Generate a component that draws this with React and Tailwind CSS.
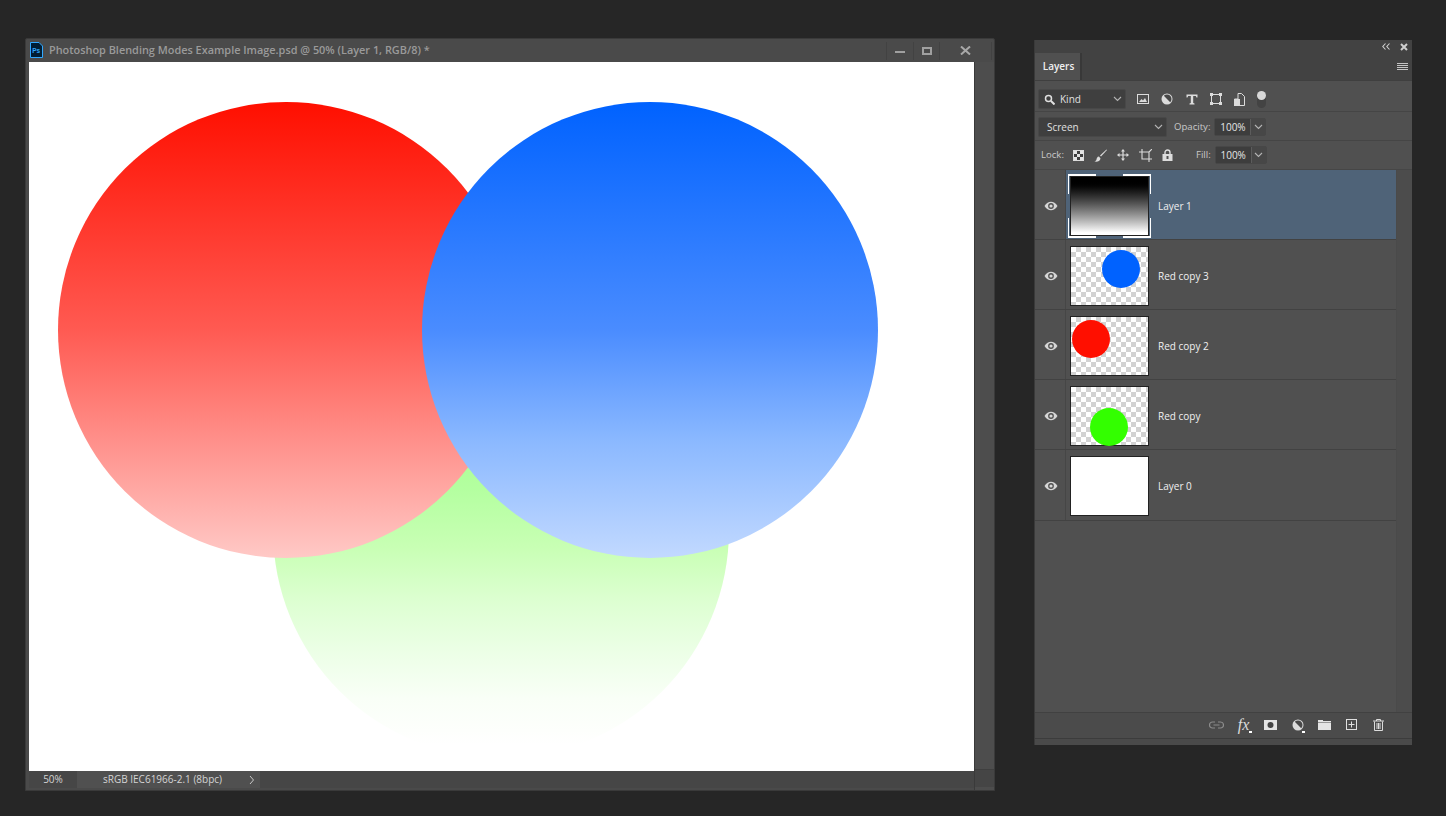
const CHECK = "bg-[conic-gradient(#d2d2d2_25%,#ffffff_0_50%,#d2d2d2_0_75%,#ffffff_0)] bg-[length:10px_10px]";

function Chevron({ className = "" }) {
  return (
    <svg width="9" height="6" viewBox="0 0 9 6" className={className}>
      <path d="M1 1l3.5 3.5L8 1" fill="none" stroke="#b4b4b4" strokeWidth="1.1" />
    </svg>
  );
}

function Eye() {
  return (
    <svg width="14" height="10" viewBox="0 0 14 10">
      <path d="M0.5 5C2.5 2 4.5 0.8 7 0.8S11.5 2 13.5 5C11.5 8 9.5 9.2 7 9.2S2.5 8 0.5 5z" fill="#d6d6d6" />
      <circle cx="7" cy="5" r="2.9" fill="#505050" />
      <circle cx="7" cy="5" r="1.6" fill="#d6d6d6" />
    </svg>
  );
}

function Adjust() {
  return (
    <svg width="12" height="12" viewBox="0 0 12 12">
      <circle cx="6" cy="6" r="5.5" fill="#dcdcdc" />
      <path d="M2.8 2.8A4.5 4.5 0 0 1 9.2 9.2z" fill="#484848" />
    </svg>
  );
}

function LayerRow({ name, selected, last, children }) {
  return (
    <div className={`flex border-b border-[#424242] ${last ? "h-[71px]" : "h-[70px]"} ${selected ? "bg-[#4f6378]" : ""}`}>
      <div className={`flex w-[31px] shrink-0 items-center justify-center border-r border-[#464646] pl-[2px] pt-[2px] ${selected ? "bg-[#505050]" : ""}`}>
        <Eye />
      </div>
      <div className="flex shrink-0 items-center pl-[4px] pt-[2px]">{children}</div>
      <span className="ml-[9px] mt-[3px] self-center text-[10px] text-[#f0f0f0]">{name}</span>
    </div>
  );
}

function Thumb({ children }) {
  return <div className={`flex h-[60px] w-[79px] border border-[#222222] ${CHECK}`}>{children}</div>;
}

function Dot({ className }) {
  return <div className={`h-[38px] w-[38px] rounded-full ${className}`} />;
}

function ValueBox() {
  return (
    <div className="flex h-[18px] items-center rounded-[2px] border border-[#474747]">
      <span className="flex h-full w-[35px] items-center justify-center bg-[#3d3d3d] text-[10px] text-[#e6e6e6]">100%</span>
      <span className="flex h-full w-[15px] items-center justify-center border-l border-[#5c5c5c] bg-[#474747]">
        <Chevron />
      </span>
    </div>
  );
}

export default function App() {
  return (
    <div className="flex h-[816px] w-full items-start gap-[39px] overflow-hidden bg-[#262626] pl-[25px] pt-[38px] font-['Open_Sans','Liberation_Sans',sans-serif]">
      {/* document window */}
      <div className="flex h-[753px] w-[970px] shrink-0 flex-col rounded-t-[2px] border border-[#3a3a3a] bg-[#4a4a4a]">
        <div className="flex h-[23px] shrink-0 items-center justify-between pl-[4px]">
          <div className="flex items-center gap-[6px]">
            <svg width="13" height="16" viewBox="0 0 13 16">
              <path d="M0.5 0.5h8.5l3.5 3.5v11.5h-12z" fill="#001d34" stroke="#31a8ff" strokeWidth="1" />
              <text x="2.2" y="11" fontSize="6.5" fontWeight="700" fill="#31a8ff" fontFamily="Liberation Sans">Ps</text>
            </svg>
            <span className="text-[10.9px] font-semibold whitespace-nowrap text-[#9a9a9a]">
              Photoshop Blending Modes Example Image.psd @ 50% (Layer 1, RGB/8) *
            </span>
          </div>
          <div className="flex h-[18px] items-stretch pr-[2px] text-[#a8a8a8]">
            <div className="flex w-[28px] items-center justify-center border-x border-[#424242] pt-[2px]">
              <div className="h-[2px] w-[10px] bg-[#a0a0a0]" />
            </div>
            <div className="flex w-[26px] items-center justify-center border-r border-[#424242]">
              <div className="h-[8px] w-[10px] border-2 border-[#a0a0a0]" />
            </div>
            <div className="flex w-[52px] items-center justify-center border-r border-[#424242]">
              <svg width="11" height="9" viewBox="0 0 11 9">
                <path d="M1 0.5l9 8M10 0.5l-9 8" stroke="#a8a8a8" strokeWidth="2" />
              </svg>
            </div>
          </div>
        </div>
        <div className="flex min-h-0 flex-1 pl-[3px]">
          <div className="flex w-[945px] shrink-0 flex-col">
            <div className="relative h-[709px] shrink-0 overflow-hidden bg-white">
              <div className="absolute left-[244px] top-[240px] h-[456px] w-[456px] rounded-full bg-[linear-gradient(to_bottom,#8fff70_0%,#b4ffa0_41%,#c8ffb4_53.7%,#dcffd0_65%,#ebffe5_76%,#f9fff7_87%,#fdfffc_94%,#ffffff_97%)]" />
              <div className="absolute left-[29px] top-[40px] h-[456px] w-[456px] rounded-full bg-[linear-gradient(to_bottom,#ff0f00_0%,#ff5a52_50%,#ffc9c6_100%)]" />
              <div className="absolute left-[393px] top-[40px] h-[456px] w-[456px] rounded-full bg-[linear-gradient(to_bottom,#0062ff_0%,#4a8cff_50%,#8ab8ff_74%,#c2d9ff_100%)]" />
            </div>
            <div className="flex h-[17px] shrink-0 items-center bg-[#464646] text-[10px] text-[#d4d4d4]">
              <span className="flex h-full w-[48px] items-center justify-center">50%</span>
              <span className="flex h-full w-[183px] items-center bg-[#505050] pl-[26px] whitespace-nowrap">sRGB IEC61966-2.1 (8bpc)</span>
              <svg width="6" height="10" viewBox="0 0 6 10" className="-ml-[11px]">
                <path d="M1 1l3.5 4L1 9" fill="none" stroke="#c8c8c8" strokeWidth="1" />
              </svg>
            </div>
          </div>
          <div className="flex w-[20px] flex-col border-l border-[#3a3a3a] bg-[#4d4d4d]">
            <div className="flex-1" />
            <div className="mb-[3px] h-[18px] border-t border-[#3f3f3f] bg-[#454545]" />
          </div>
        </div>
      </div>

      {/* layers panel */}
      <div className="mt-[2px] flex h-[705px] w-[378px] shrink-0 flex-col border-l border-[#3a3a3a] bg-[#505050] text-[#e0e0e0]">
        <div className="flex h-[13px] shrink-0 items-center justify-end gap-[10px] bg-[#424242] pr-[4px]">
          <svg width="8" height="7" viewBox="0 0 8 7">
            <path d="M3.5 0.5L0.8 3.5l2.7 3M7.5 0.5L4.8 3.5l2.7 3" fill="none" stroke="#d0d0d0" strokeWidth="1.1" />
          </svg>
          <svg width="8" height="8" viewBox="0 0 8 8">
            <path d="M1 1l6 6M7 1l-6 6" stroke="#cfcfcf" strokeWidth="2" />
          </svg>
        </div>
        <div className="flex h-[28px] shrink-0 items-center justify-between border-b border-[#3f3f3f] bg-[#424242]">
          <div className="flex h-full w-[47px] items-center justify-center border-r-2 border-[#383838] bg-[#505050] pl-[2px] text-[10px] font-semibold text-[#f0f0f0]">
            Layers
          </div>
          <svg width="11" height="8" viewBox="0 0 11 8" className="mr-[4px]">
            <path d="M0 .5h11M0 2.5h11M0 4.5h11M0 6.5h11" stroke="#c4c4c4" strokeWidth="1" />
          </svg>
        </div>

        <div className="flex h-[31px] shrink-0 items-center border-b border-[#454545] pl-[3px] pt-[6px]">
          <div className="flex h-[20px] w-[88px] items-center rounded-[2px] border border-[#484848] bg-[#3f3f3f] pl-[5px] pr-[3px] text-[10px]">
            <svg width="11" height="11" viewBox="0 0 11 11">
              <circle cx="4.5" cy="4.5" r="3" fill="none" stroke="#e0e0e0" strokeWidth="1.5" />
              <path d="M7 7l3.5 3.5" stroke="#e0e0e0" strokeWidth="2" />
            </svg>
            <span className="ml-[5px] flex-1">Kind</span>
            <Chevron />
          </div>
          <div className="ml-[11px] flex items-center gap-[12.25px]">
            <svg width="12" height="10" viewBox="0 0 12 10">
              <rect x="0.5" y="0.5" width="11" height="9" fill="none" stroke="#dcdcdc" />
              <path d="M2 8l2.5-3 1.5 1.5L8 4l2 4z" fill="#dcdcdc" />
            </svg>
            <Adjust />
            <svg width="12" height="11" viewBox="0 0 12 11">
              <path d="M0.5 0.5h11v3h-1l-.7-1.5H7.2v7l1.3.5v1h-5v-1l1.3-.5v-7H2.2L1.5 3.5h-1z" fill="#dcdcdc" />
            </svg>
            <svg width="12" height="12" viewBox="0 0 12 12">
              <rect x="1.5" y="1.5" width="9" height="9" fill="none" stroke="#dcdcdc" />
              <path d="M0 0h3v3H0zM9 0h3v3H9zM0 9h3v3H0zM9 9h3v3H9z" fill="#dcdcdc" />
            </svg>
            <svg width="11" height="13" viewBox="0 0 11 13">
              <path d="M4 0.5h3.5l3 3v9h-10V6H4z" fill="none" stroke="#dcdcdc" />
              <rect x="0" y="6" width="6" height="7" fill="#dcdcdc" />
            </svg>
          </div>
          <div className="ml-[12px] flex h-[17px] w-[9px] flex-col items-center rounded-full bg-[#434343]">
            <div className="h-[9px] w-[9px] rounded-full bg-[#d8d8d8]" />
          </div>
        </div>

        <div className="flex h-[29px] shrink-0 items-center border-b border-[#454545] pl-[3px] pt-[2px]">
          <div className="flex h-[20px] w-[129px] items-center justify-between rounded-[2px] border border-[#484848] bg-[#3f3f3f] pl-[8px] pr-[3px] text-[10px]">
            Screen <Chevron />
          </div>
          <span className="ml-[7px] mr-[4px] text-[9.6px] text-[#c8c8c8]">Opacity:</span>
          <ValueBox />
        </div>

        <div className="flex h-[29px] shrink-0 items-center border-b border-[#464646] pl-[6px]">
          <span className="text-[9.6px] text-[#c8c8c8]">Lock:</span>
          <div className="ml-[9px] flex items-center gap-[10px]">
            <svg width="11" height="11" viewBox="0 0 11 11">
              <rect x="0.5" y="0.5" width="10" height="10" fill="#3e3e3e" stroke="#dcdcdc" />
              <path d="M1 1h3v3H1zM7 1h3v3H7zM4 4h3v3H4zM1 7h3v3H1zM7 7h3v3H7z" fill="#e4e4e4" />
            </svg>
            <svg width="13" height="13" viewBox="0 0 13 13">
              <path d="M12.5 0.5L6 6.5l1 1L13 1z" fill="#dcdcdc" />
              <path d="M5 7.5C3 7.5 2.8 9.5 2.5 10.5 2.2 11.5 1.5 12 .5 12.5c2.5.5 5.5 0 6-3z" fill="#dcdcdc" />
            </svg>
            <svg width="12" height="12" viewBox="0 0 12 12">
              <path d="M6 0L8 2.5H6.6V5.4H9.5V4L12 6 9.5 8V6.6H6.6V9.5H8L6 12 4 9.5H5.4V6.6H2.5V8L0 6 2.5 4V5.4H5.4V2.5H4z" fill="#dcdcdc" />
            </svg>
            <svg width="13" height="13" viewBox="0 0 13 13">
              <path d="M0 3h10v10M3 0v10h10M10 3L13 0" fill="none" stroke="#dcdcdc" strokeWidth="1.1" />
            </svg>
            <svg width="11" height="12" viewBox="0 0 11 12">
              <path d="M3 5V3.5a2.5 2.5 0 0 1 5 0V5" fill="none" stroke="#dcdcdc" strokeWidth="1.4" />
              <rect x="0.5" y="5" width="10" height="7" fill="#dcdcdc" />
              <rect x="4.5" y="7" width="2" height="3" fill="#505050" />
            </svg>
          </div>
          <span className="ml-[23px] mr-[4px] text-[9.6px] text-[#c8c8c8]">Fill:</span>
          <ValueBox />
        </div>

        <div className="flex min-h-0 flex-1">
          <div className="w-[361px] shrink-0">
            <LayerRow name="Layer 1" selected>
              <div className="relative">
                <div className="h-[60px] w-[79px] border border-[#222222] bg-gradient-to-b from-black from-[5%] to-white to-[96%]" />
                <div className="absolute -left-[2px] -top-[2px] h-[20px] w-[28px] border-l border-t-2 border-white" />
                <div className="absolute -right-[2px] -top-[2px] h-[20px] w-[28px] border-r border-t-2 border-white" />
                <div className="absolute -bottom-[2px] -left-[2px] h-[20px] w-[28px] border-b-2 border-l border-white" />
                <div className="absolute -bottom-[2px] -right-[2px] h-[20px] w-[28px] border-b-2 border-r border-white" />
              </div>
            </LayerRow>
            <LayerRow name="Red copy 3">
              <Thumb><Dot className="ml-[31px] mt-[3px] bg-[#0062ff]" /></Thumb>
            </LayerRow>
            <LayerRow name="Red copy 2">
              <Thumb><Dot className="ml-[1px] mt-[3px] bg-[#ff0f00]" /></Thumb>
            </LayerRow>
            <LayerRow name="Red copy">
              <Thumb><Dot className="ml-[19px] mt-[21px] bg-[#33ff00]" /></Thumb>
            </LayerRow>
            <LayerRow name="Layer 0" last>
              <div className="h-[60px] w-[79px] border border-[#222222] bg-white" />
            </LayerRow>
          </div>
          <div className="flex-1 border-l border-[#4a4a4a] bg-[#4c4c4c]" />
        </div>

        <div className="flex h-[26px] shrink-0 items-center justify-end border-t border-[#414141] bg-[#4b4b4b] pb-[2px] pr-[20px]">
          <span className="flex w-[27px] justify-center">
            <svg width="15" height="8" viewBox="0 0 15 8">
              <path d="M6 1H3.5a3 3 0 0 0 0 6H6M9 1h2.5a3 3 0 0 1 0 6H9M4.5 4h6" fill="none" stroke="#8c8c8c" strokeWidth="1.2" />
            </svg>
          </span>
          <span className="flex w-[27px] justify-center">
            <span className="relative font-['Liberation_Serif',serif] text-[16px] leading-none italic text-[#dcdcdc]">
              fx
              <span className="absolute -right-[3px] bottom-0 h-[2px] w-[3px] bg-white" />
            </span>
          </span>
          <span className="flex w-[27px] justify-center">
            <svg width="13" height="10" viewBox="0 0 13 10">
              <rect width="13" height="10" fill="#e4e4e4" />
              <circle cx="6.5" cy="5" r="3" fill="#444444" />
            </svg>
          </span>
          <span className="relative flex w-[27px] justify-center">
            <Adjust />
            <span className="absolute bottom-[-2px] left-[18px] h-[2px] w-[3px] bg-white" />
          </span>
          <span className="flex w-[27px] justify-center">
            <svg width="13" height="10" viewBox="0 0 13 10">
              <path d="M0 0h5v1h8v1H0zM0 2.5h13V10H0z" fill="#e4e4e4" />
            </svg>
          </span>
          <span className="flex w-[27px] justify-center">
            <svg width="11" height="11" viewBox="0 0 11 11">
              <rect x="0.5" y="0.5" width="10" height="10" fill="none" stroke="#e0e0e0" />
              <path d="M5.5 2.5v6M2.5 5.5h6" stroke="#e0e0e0" />
            </svg>
          </span>
          <span className="flex w-[27px] justify-center">
            <svg width="11" height="12" viewBox="0 0 11 12">
              <path d="M0 2h11M3.5 2V.5h4V2M1.5 2.5v9h8v-9M4 4v6M5.5 4v6M7 4v6" fill="none" stroke="#dcdcdc" />
            </svg>
          </span>
        </div>
        <div className="h-[7px] shrink-0 border-t border-[#3c3c3c] bg-[#4a4a4a]" />
      </div>
    </div>
  );
}
